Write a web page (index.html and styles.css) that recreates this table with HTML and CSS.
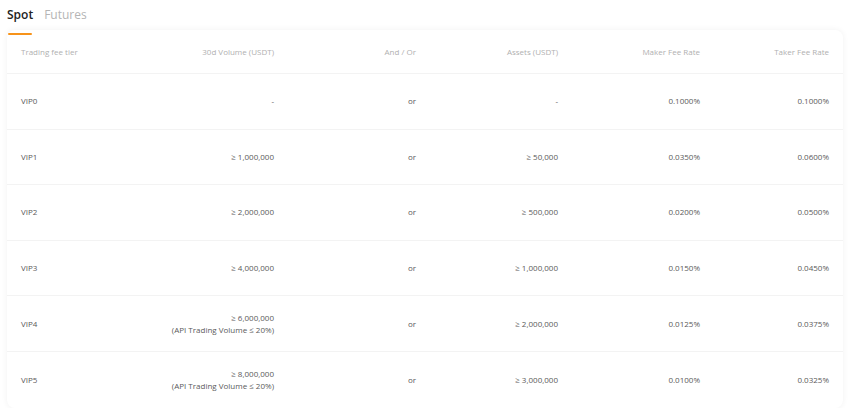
FILE: index.html
```html
<!DOCTYPE html>
<html>
<head>
<meta charset="utf-8">
<link rel="stylesheet" href="styles.css">
</head>
<body>
<div class="page">
  <div class="tabs">
    <div class="tab active">Spot</div>
    <div class="tab">Futures</div>
  </div>
  <div class="card">
    <div class="row head">
      <div class="c1">Trading fee tier</div>
      <div class="cr">30d Volume (USDT)</div>
      <div class="cr">And / Or</div>
      <div class="cr">Assets (USDT)</div>
      <div class="cr">Maker Fee Rate</div>
      <div class="cr">Taker Fee Rate</div>
    </div>
    <div class="row">
      <div class="c1">VIP0</div>
      <div class="cr">-</div>
      <div class="cr">or</div>
      <div class="cr">-</div>
      <div class="cr">0.1000%</div>
      <div class="cr">0.1000%</div>
    </div>
    <div class="row">
      <div class="c1">VIP1</div>
      <div class="cr">≥ 1,000,000</div>
      <div class="cr">or</div>
      <div class="cr">≥ 50,000</div>
      <div class="cr">0.0350%</div>
      <div class="cr">0.0600%</div>
    </div>
    <div class="row">
      <div class="c1">VIP2</div>
      <div class="cr">≥ 2,000,000</div>
      <div class="cr">or</div>
      <div class="cr">≥ 500,000</div>
      <div class="cr">0.0200%</div>
      <div class="cr">0.0500%</div>
    </div>
    <div class="row">
      <div class="c1">VIP3</div>
      <div class="cr">≥ 4,000,000</div>
      <div class="cr">or</div>
      <div class="cr">≥ 1,000,000</div>
      <div class="cr">0.0150%</div>
      <div class="cr">0.0450%</div>
    </div>
    <div class="row">
      <div class="c1">VIP4</div>
      <div class="cr">≥ 6,000,000<br>(API Trading Volume ≤ 20%)</div>
      <div class="cr">or</div>
      <div class="cr">≥ 2,000,000</div>
      <div class="cr">0.0125%</div>
      <div class="cr">0.0375%</div>
    </div>
    <div class="row last">
      <div class="c1">VIP5</div>
      <div class="cr">≥ 8,000,000<br>(API Trading Volume ≤ 20%)</div>
      <div class="cr">or</div>
      <div class="cr">≥ 3,000,000</div>
      <div class="cr">0.0100%</div>
      <div class="cr">0.0325%</div>
    </div>
  </div>
</div>
</body>
</html>
```
FILE: styles.css
```css
* { box-sizing: border-box; }
html, body { margin: 0; padding: 0; background: #fff; }
body { font-family: "Open Sans", "Noto Sans", sans-serif; }
.page { padding: 6px 7px 0 7px; width: 850px; }
.tabs { display: flex; gap: 11px; height: 24px; }
.tab { font-size: 12px; color: #b5b5b5; line-height: 18px; position: relative; font-weight: 500; }
.tab.active { color: #222; font-weight: 600; }
.tab.active::after { content: ""; position: absolute; left: 1px; right: 1px; bottom: -5px; height: 2px; background: #f7931a; border-radius: 1px; }
.card { width: 836px; border-radius: 8px; box-shadow: 0 0 6px rgba(0,0,0,0.06); background: #fff; }
.row { display: grid; grid-template-columns: 139px 142px 142px 142px 142px 1fr; align-items: center; height: 55.6px; border-bottom: 1px solid #f3f3f3; font-size: 8px; color: #5a5a5a; line-height: 12px; }
.row.head { height: 44px; color: #b0b0b0; }
.row.last { border-bottom: none; }
.c1 { padding-left: 14px; }
.cr { text-align: right; padding-right: 14px; }
```
